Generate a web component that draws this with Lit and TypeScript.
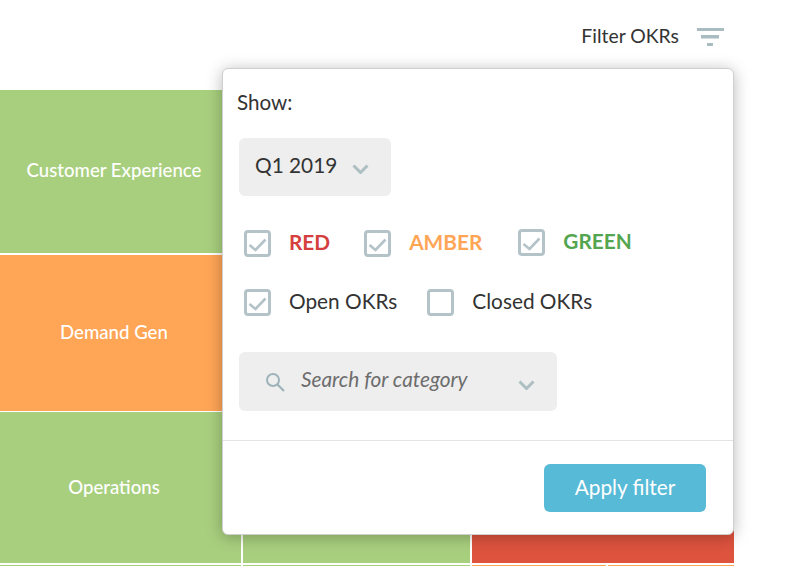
import { LitElement, html, css, svg } from "lit";
import { customElement } from "lit/decorators.js";

const chevron = svg`<path d="M1.5 1.5 L8.5 8.5 L15.5 1.5" fill="none" stroke="#aebfc4" stroke-width="3"/>`;
const check = svg`<path d="M5.500 15 L11.500 20 L21.500 9.500" fill="none" stroke="#b3c3c8" stroke-width="2.600"/>`;

@customElement("app-root")
export class AppRoot extends LitElement {
  static styles = css`
    :host { display: block; position: relative; width: 786px; height: 566px; overflow: hidden; background: #fff;
      font-family: Lato, "Liberation Sans", sans-serif; color: #333; }
    .top { height: 90px; box-sizing: border-box; display: flex; justify-content: flex-end; align-items: flex-start; padding: 25px 62px 0 0; gap: 18px; font-size: 19.4px; line-height: 22px; }
    .funnel { display: block; margin-top: 3px; }
    .map { width: 734px; display: grid; grid-template-columns: 241px 227px 134px 126px; grid-template-rows: 163px 156px 151px 20px; gap: 1.5px 2px; background: #fff; }
    .cell { display: flex; align-items: center; justify-content: center; color: #fff; font-size: 18.6px; font-weight: 500; padding-right: 13px; }
    .g { background: #a8cf7e; }
    .o { background: #ffa556; }
    .r { background: #dd533e; }
    .w2 { grid-column: span 2; }
    .w3 { grid-column: span 3; }
    .t1 { padding-bottom: 4px; }
    .t2 { padding-bottom: 2px; }
    .t3 { padding-bottom: 2px; }
    .pop { position: absolute; left: 222px; top: 68px; width: 512px; height: 467px; box-sizing: border-box; background: #fff; border-radius: 6px;
      border: 1px solid #cfcfcf; box-shadow: 0 2px 16px rgba(0,0,0,.28); display: flex; flex-direction: column; }
    .body { flex: 1; padding: 21px 14px 0 14px; border-bottom: 1px solid #e4e4e4; display: flex; flex-direction: column; align-items: flex-start; }
    .show { font-size: 20.600px; line-height: 24px; }
    .select { background: #eee; border-radius: 6px; display: flex; align-items: center; margin: 24px 0 0 2px; }
    .quarter { width: 152px; height: 58px; padding: 0 22px 0 16px; box-sizing: border-box; justify-content: space-between; font-size: 20.800px; }
    .quarter span { position: relative; top: -3px; }
    .quarter svg { margin-top: 3px; }
    .row { display: flex; align-items: center; margin-left: 7px; font-size: 20.800px; }
    .r1 { margin-top: 34px; height: 27px; }
    .r2 { margin-top: 32px; height: 27px; }
    .box { display: block; flex: none; width: 27px; height: 27px; }
    .lab { margin-left: 18px; position: relative; top: -2px; }
    .status { font-weight: 700; }
    .red { margin-right: 34px; color: #d5403f; }
    .amber { margin-right: 36px; color: #ffa556; }
    .green { color: #54a54f; top: -3px; }
    .gb { position: relative; top: -1px; }
    .open { margin-right: 30px; }
    .search { width: 318px; height: 59px; margin-top: 36px; box-sizing: border-box; padding: 0 22px 0 26px; font-size: 20.800px; font-style: italic; color: #6d6d6d; }
    .search .txt { margin-left: 16px; flex: 1; position: relative; top: -3px; }
    .search .chev { margin-top: 6px; }
    .foot { height: 93px; flex: none; box-sizing: border-box; display: flex; justify-content: flex-end; padding: 23px 27px 0 0; }
    .apply { width: 162px; height: 48px; border: none; border-radius: 6px; background: #57bad6; color: #fff; font: 20.800px Lato, "Liberation Sans", sans-serif; padding: 0 0 3px; }
  `;

  box(on: boolean, cls = "") {
    return html`<svg class="box ${cls}" viewBox="0 0 27 27"><rect x="1.5" y="1.5" width="24" height="24" rx="2.5" fill="#fff" stroke="#b3c3c8" stroke-width="3"/>${on ? check : null}</svg>`;
  }

  render() {
    return html`
      <div class="top">
        <span>Filter OKRs</span>
        <svg class="funnel" width="27" height="18" viewBox="0 0 27 18">
          <rect x="0" y="0" width="27" height="3" fill="#a9bcc2"/><rect x="4" y="7" width="18" height="3.500" fill="#a9bcc2"/><rect x="10" y="15" width="6" height="3" fill="#a9bcc2"/>
        </svg>
      </div>
      <div class="map">
        <div class="cell g t1">Customer Experience</div><div class="cell g w3"></div>
        <div class="cell o t2">Demand Gen</div><div class="cell o w3"></div>
        <div class="cell g t3">Operations</div><div class="cell g"></div><div class="cell r w2"></div>
        <div class="cell g"></div><div class="cell g"></div><div class="cell o"></div><div class="cell o"></div>
      </div>
      <div class="pop">
        <div class="body">
          <div class="show">Show:</div>
          <div class="select quarter"><span>Q1 2019</span><svg width="17" height="10" viewBox="0 0 17 10">${chevron}</svg></div>
          <div class="row r1">
            ${this.box(true)}<span class="lab status red">RED</span>
            ${this.box(true)}<span class="lab status amber">AMBER</span>
            ${this.box(true, "gb")}<span class="lab status green">GREEN</span>
          </div>
          <div class="row r2">
            ${this.box(true)}<span class="lab open">Open OKRs</span>
            ${this.box(false)}<span class="lab">Closed OKRs</span>
          </div>
          <div class="select search">
            <svg width="20" height="20" viewBox="0 0 20 20"><circle cx="8" cy="8" r="6" fill="none" stroke="#9db3b9" stroke-width="2"/><path d="M12.500 12.500 L19 19" stroke="#9db3b9" stroke-width="2.200"/></svg>
            <span class="txt">Search for category</span>
            <svg class="chev" width="17" height="10" viewBox="0 0 17 10">${chevron}</svg>
          </div>
        </div>
        <div class="foot"><button class="apply">Apply filter</button></div>
      </div>
    `;
  }
}
